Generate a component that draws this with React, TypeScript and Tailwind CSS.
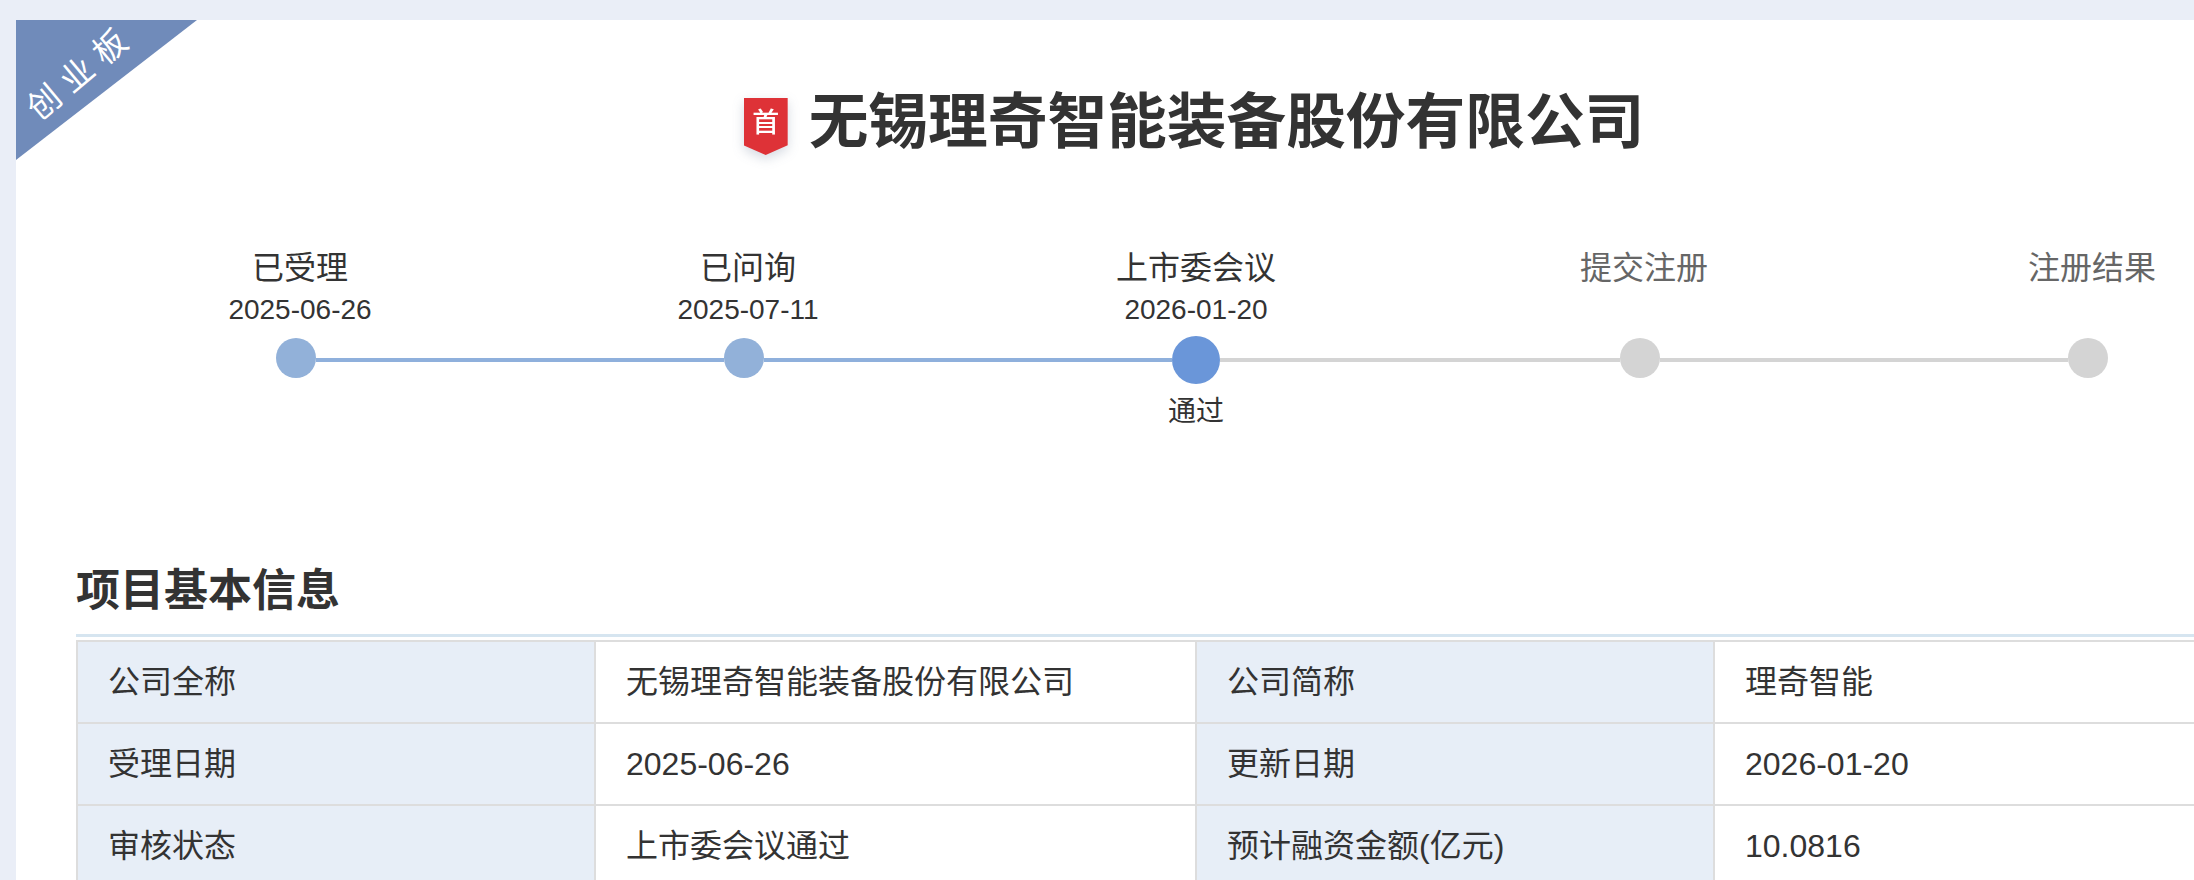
export default function App() {
  const steps = [
    { label: "已受理", date: "2025-06-26", on: true },
    { label: "已问询", date: "2025-07-11", on: true },
    { label: "上市委会议", date: "2026-01-20", on: true },
    { label: "提交注册", date: "", on: false },
    { label: "注册结果", date: "", on: false },
  ];
  const rows = [
    ["公司全称", "无锡理奇智能装备股份有限公司", "公司简称", "理奇智能"],
    ["受理日期", "2025-06-26", "更新日期", "2026-01-20"],
    ["审核状态", "上市委会议通过", "预计融资金额(亿元)", "10.0816"],
  ];
  return (
    <div className="h-[880px] w-full overflow-hidden bg-[#eaeef7] pl-4 pt-5 font-['Liberation_Sans','Noto_Sans_CJK_SC',sans-serif] text-[#333]">
      <div className="relative h-[860px] w-[2360px] bg-white pl-[60px]">
        <div className="absolute left-0 top-0 h-[140px] w-[181px] bg-[#708bba] [clip-path:polygon(0_0,100%_0,0_100%)]" />
        <div className="absolute left-[-15px] top-[35px] w-[160px] -rotate-[40deg] whitespace-nowrap text-center text-[33px] leading-none tracking-[10px] text-white">
          创业板
        </div>

        <div className="flex h-[176px] items-start justify-center pr-[64px] pt-[78px]">
          <div className="flex items-start gap-[21px]">
            <div className="relative h-[57px] w-[44px] drop-shadow-[0_4px_6px_rgba(60,80,120,0.22)]">
              <div className="flex h-full w-full justify-center bg-[#de3237] pt-[9px] text-[27px] font-medium leading-[32px] text-white [clip-path:polygon(0_0,100%_0,100%_83%,50%_100%,0_83%)]">
                首
              </div>
            </div>
            <h1 className="-mt-[5px] text-[59.7px] font-bold leading-[60px]">无锡理奇智能装备股份有限公司</h1>
          </div>
        </div>

        <div className="flex pt-[50px]">
          {steps.map((s) => (
            <div key={s.label} className="w-[448px] shrink-0 text-center">
              <div className={`text-[32px] leading-[44px] ${s.on ? "text-[#333]" : "text-[#666]"}`}>{s.label}</div>
              <div className="h-[40px] text-[28px] leading-[40px]">{s.date}</div>
            </div>
          ))}
        </div>

        <div className="mt-[6px] flex items-start pl-[200px]">
          <div className="mt-[2px] h-10 w-10 shrink-0 rounded-full bg-[#92b1d9]" />
          <div className="mt-[22px] h-1 w-[408px] shrink-0 bg-[#8fb0dc]" />
          <div className="mt-[2px] h-10 w-10 shrink-0 rounded-full bg-[#92b1d9]" />
          <div className="mt-[22px] h-1 w-[408px] shrink-0 bg-[#8fb0dc]" />
          <div className="h-12 w-12 shrink-0 rounded-full bg-[#6a96d9]" />
          <div className="mt-[22px] h-1 w-[400px] shrink-0 bg-[#d4d4d4]" />
          <div className="mt-[2px] h-10 w-10 shrink-0 rounded-full bg-[#d4d4d4]" />
          <div className="mt-[22px] h-1 w-[408px] shrink-0 bg-[#d4d4d4]" />
          <div className="mt-[2px] h-10 w-10 shrink-0 rounded-full bg-[#d4d4d4]" />
        </div>

        <div className="mt-[8px] flex">
          <div className="w-[896px] shrink-0" />
          <div className="w-[448px] shrink-0 text-center text-[28px] leading-[40px]">通过</div>
        </div>

        <h2 className="mt-[131px] text-[44px] font-bold leading-[56px]">项目基本信息</h2>
        <div className="mt-[15px] h-[3px] w-[2240px] bg-[#d6e5f0]" />
        <table className="mt-[3px] w-[2240px] table-fixed border-collapse border-2 border-[#dddddd] text-[32px]">
          <colgroup>
            <col className="w-[518px]" />
            <col className="w-[601px]" />
            <col className="w-[518px]" />
            <col className="w-[603px]" />
          </colgroup>
          <tbody>
            {rows.map((r) => (
              <tr key={r[0]} className="h-[82px]">
                {r.map((c, i) => (
                  <td
                    key={c}
                    className={`border-2 border-[#dddddd] px-[30px] leading-[44px] ${i % 2 === 0 ? "bg-[#e7eef7]" : "bg-white"}`}
                  >
                    {c}
                  </td>
                ))}
              </tr>
            ))}
          </tbody>
        </table>
      </div>
    </div>
  );
}
